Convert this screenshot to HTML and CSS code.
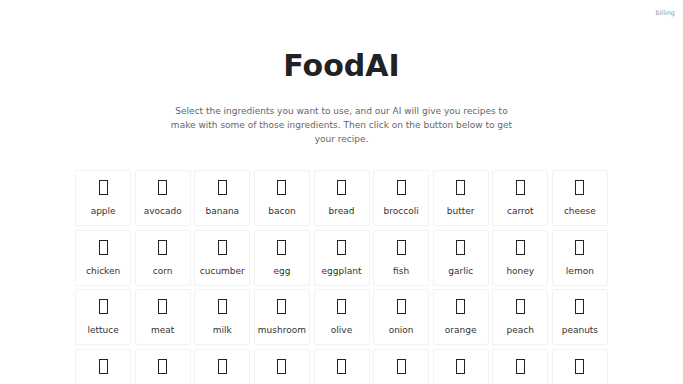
FILE: index.html
```html
<!DOCTYPE html>
<html>
<head>
<meta charset="utf-8">
<link rel="stylesheet" href="styles.css">
</head>
<body>
<header class="top"><span class="billing">billing</span></header>
<main class="main">
  <h1 class="title">FoodAI</h1>
  <p class="intro">Select the ingredients you want to use, and our AI will give you recipes to make with some of those ingredients. Then click on the button below to get your recipe.</p>
  <div class="grid">
    <div class="cell"><span class="tofu"></span><span class="label">apple</span></div>
    <div class="cell"><span class="tofu"></span><span class="label">avocado</span></div>
    <div class="cell"><span class="tofu"></span><span class="label">banana</span></div>
    <div class="cell"><span class="tofu"></span><span class="label">bacon</span></div>
    <div class="cell"><span class="tofu"></span><span class="label">bread</span></div>
    <div class="cell"><span class="tofu"></span><span class="label">broccoli</span></div>
    <div class="cell"><span class="tofu"></span><span class="label">butter</span></div>
    <div class="cell"><span class="tofu"></span><span class="label">carrot</span></div>
    <div class="cell"><span class="tofu"></span><span class="label">cheese</span></div>
    <div class="cell"><span class="tofu"></span><span class="label">chicken</span></div>
    <div class="cell"><span class="tofu"></span><span class="label">corn</span></div>
    <div class="cell"><span class="tofu"></span><span class="label">cucumber</span></div>
    <div class="cell"><span class="tofu"></span><span class="label">egg</span></div>
    <div class="cell"><span class="tofu"></span><span class="label">eggplant</span></div>
    <div class="cell"><span class="tofu"></span><span class="label">fish</span></div>
    <div class="cell"><span class="tofu"></span><span class="label">garlic</span></div>
    <div class="cell"><span class="tofu"></span><span class="label">honey</span></div>
    <div class="cell"><span class="tofu"></span><span class="label">lemon</span></div>
    <div class="cell"><span class="tofu"></span><span class="label">lettuce</span></div>
    <div class="cell"><span class="tofu"></span><span class="label">meat</span></div>
    <div class="cell"><span class="tofu"></span><span class="label">milk</span></div>
    <div class="cell"><span class="tofu"></span><span class="label">mushroom</span></div>
    <div class="cell"><span class="tofu"></span><span class="label">olive</span></div>
    <div class="cell"><span class="tofu"></span><span class="label">onion</span></div>
    <div class="cell"><span class="tofu"></span><span class="label">orange</span></div>
    <div class="cell"><span class="tofu"></span><span class="label">peach</span></div>
    <div class="cell"><span class="tofu"></span><span class="label">peanuts</span></div>
    <div class="cell"><span class="tofu"></span><span class="label">pear</span></div>
    <div class="cell"><span class="tofu"></span><span class="label">pepper</span></div>
    <div class="cell"><span class="tofu"></span><span class="label">potato</span></div>
    <div class="cell"><span class="tofu"></span><span class="label">rice</span></div>
    <div class="cell"><span class="tofu"></span><span class="label">salmon</span></div>
    <div class="cell"><span class="tofu"></span><span class="label">shrimp</span></div>
    <div class="cell"><span class="tofu"></span><span class="label">spinach</span></div>
    <div class="cell"><span class="tofu"></span><span class="label">strawberry</span></div>
    <div class="cell"><span class="tofu"></span><span class="label">tomato</span></div>
  </div>
</main>
</body>
</html>
```

FILE: styles.css
```css
* { box-sizing: border-box; }
html, body {
  margin: 0;
  padding: 0;
  background: #fff;
  font-family: "DejaVu Sans", sans-serif;
  color: #222;
  overflow: hidden;
}
.top {
  display: flex;
  justify-content: flex-end;
  padding: 9px 8px 0 0;
  height: 20px;
}
.billing {
  font-size: 6.5px;
  color: #999;
}
.main {
  display: flex;
  flex-direction: column;
  align-items: center;
}
.title {
  margin: 26px 0 0 0;
  font-size: 30px;
  line-height: 40px;
  font-weight: bold;
  color: #222;
}
.intro {
  margin: 18px 0 0 0;
  width: 348px;
  text-align: center;
  font-size: 9px;
  line-height: 14px;
  color: #666;
}
.grid {
  margin-top: 24px;
  display: grid;
  grid-template-columns: repeat(9, 56px);
  grid-auto-rows: 56px;
  gap: 3.6px;
}
.cell {
  border: 1px solid #f2f2f2;
  border-radius: 2px;
  display: flex;
  flex-direction: column;
  align-items: center;
  padding-top: 9px;
}
.tofu {
  width: 9px;
  height: 15px;
  border: 1px solid #222;
}
.label {
  margin-top: 11px;
  font-size: 9px;
  color: #333;
}
```
